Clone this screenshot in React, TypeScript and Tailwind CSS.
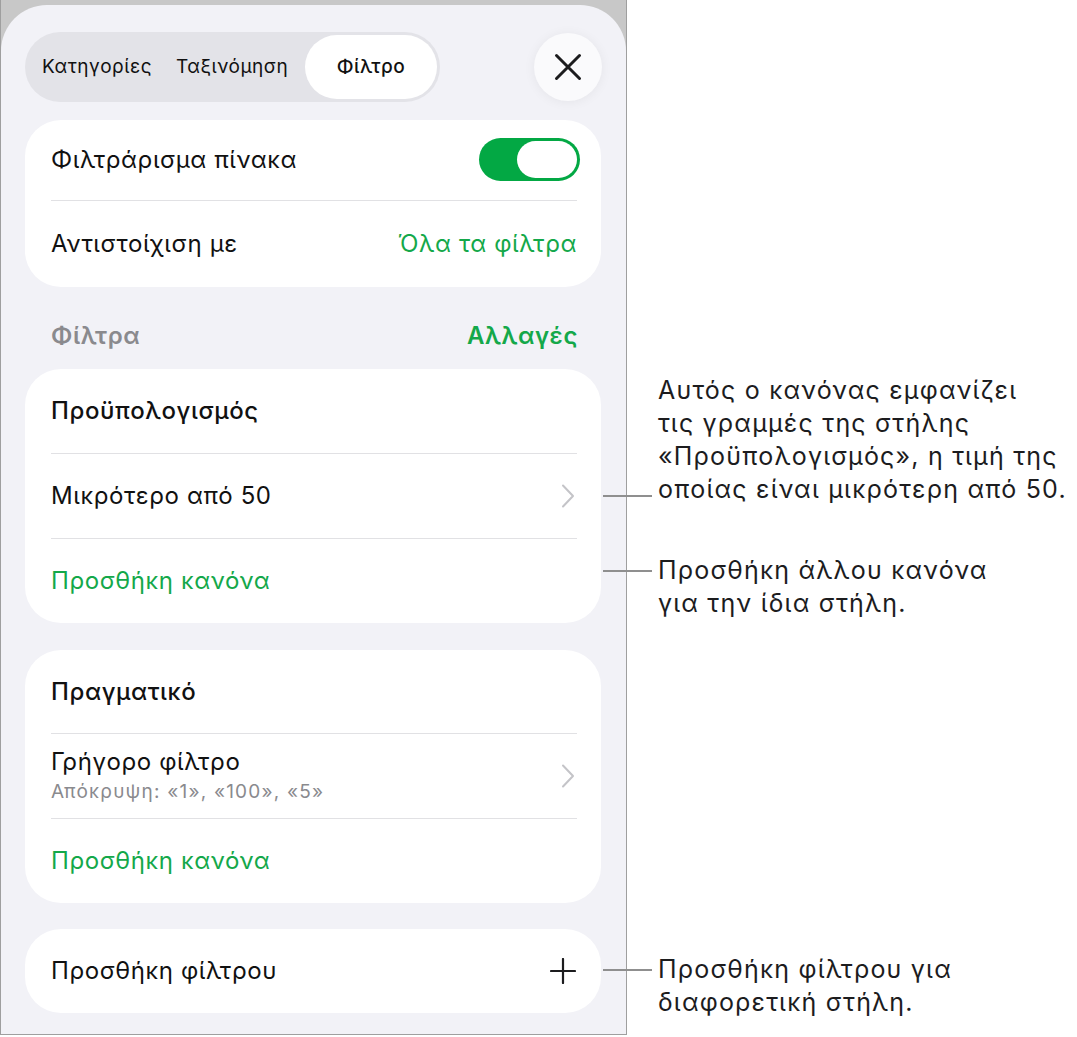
const font = "font-['Inter','Roboto',sans-serif]";

// thin divider inside a grouped card
const Divider = () => <div className="h-px bg-[#e1e1e4]" />;

const Chevron = () => (
  <svg width="14" height="24" viewBox="0 0 14 24" className="mr-[2px]">
    <path d="M2 1.5 L12 12 L2 22.5" fill="none" stroke="#c4c4c8" strokeWidth="2" strokeLinecap="round" strokeLinejoin="round" />
  </svg>
);

const Callout = ({ top, lineAt, lines }: { top: number; lineAt: number; lines: string[] }) => (
  <div className="absolute left-[603px]" style={{ top }}>
    <div className="absolute left-0 h-[2px] w-[49px] bg-[#8f8f8f]" style={{ top: lineAt }} />
    <div className="pl-[55px] text-[25px] leading-[33px] tracking-[1.2px] text-[#1c1c1e] whitespace-nowrap">
      {lines.map((l) => (
        <div key={l}>{l}</div>
      ))}
    </div>
  </div>
);

export default function App() {
  return (
    <div className={`relative w-[1077px] h-[1037px] bg-white ${font}`}>
      {/* sheet frame */}
      <div className="w-[627px] h-[1035px] border-x border-b border-[#9f9f9f] bg-[#c8c8c8] pt-[5px]">
        <div className="h-full rounded-t-[46px] bg-[#f2f2f7] px-[24px] pt-[27px] tracking-[0.6px] text-[#111]">
          {/* tabs + close */}
          <div className="flex items-center justify-between">
            <div className="flex h-[70px] w-[415px] items-center rounded-full bg-[#e3e3e8] pl-[17px] pr-[3px] text-[19px] tracking-[0.5px]">
              <span>Κατηγορίες</span>
              <span className="ml-[24px]">Ταξινόμηση</span>
              <div className="ml-auto flex h-[64px] w-[132px] items-center justify-center rounded-full bg-white font-medium">
                Φίλτρο
              </div>
            </div>
            <button className="flex h-[68px] w-[68px] items-center justify-center rounded-full bg-[#fafafc] shadow-[0_1px_12px_rgba(0,0,0,0.06)]">
              <svg width="28" height="28" viewBox="0 0 28 28">
                <path d="M2.5 2.5 L25.5 25.5 M25.5 2.5 L2.5 25.5" stroke="#1c1c1e" strokeWidth="3" strokeLinecap="round" />
              </svg>
            </button>
          </div>

          {/* table filtering */}
          <div className="mt-[18px] w-[576px] rounded-[36px] bg-white pl-[26px] pr-[24px] text-[24px]">
            <div className="flex h-[80px] items-center justify-between">
              <span>Φιλτράρισμα πίνακα</span>
              <div className="-mr-[3px] mt-[-2px] flex h-[43px] w-[101px] items-center justify-end rounded-full bg-[#03a844] px-[3px]">
                <div className="h-[37px] w-[60px] rounded-full bg-white" />
              </div>
            </div>
            <Divider />
            <div className="flex h-[86px] items-center justify-between">
              <span>Αντιστοίχιση με</span>
              <span className="text-[#14a84a]">Όλα τα φίλτρα</span>
            </div>
          </div>

          {/* section header */}
          <div className="flex h-[82px] items-center justify-between pl-[26px] pr-[24px] pt-[16px] text-[24px] font-semibold">
            <span className="text-[#8a8a8e]">Φίλτρα</span>
            <span className="text-[#14a84a]">Αλλαγές</span>
          </div>

          {/* rule group: budget */}
          <div className="w-[576px] rounded-[36px] bg-white pl-[26px] pr-[24px] text-[24px]">
            <div className="flex h-[84px] items-center font-medium">Προϋπολογισμός</div>
            <Divider />
            <div className="flex h-[84px] items-center justify-between">
              <span>Μικρότερο από 50</span>
              <Chevron />
            </div>
            <Divider />
            <div className="flex h-[84px] items-center text-[#14a84a]">Προσθήκη κανόνα</div>
          </div>

          {/* rule group: actual */}
          <div className="mt-[27px] w-[576px] rounded-[36px] bg-white pl-[26px] pr-[24px] text-[24px]">
            <div className="flex h-[83px] items-center font-medium">Πραγματικό</div>
            <Divider />
            <div className="flex h-[84px] items-center justify-between">
              <div className="flex flex-col">
                <span className="leading-[30px]">Γρήγορο φίλτρο</span>
                <span className="mt-[2px] text-[19px] leading-[26px] tracking-[1.2px] text-[#8a8a8e]">
                  Απόκρυψη: «1», «100», «5»
                </span>
              </div>
              <Chevron />
            </div>
            <Divider />
            <div className="flex h-[84px] items-center text-[#14a84a]">Προσθήκη κανόνα</div>
          </div>

          {/* add filter */}
          <div className="mt-[26px] flex h-[84px] w-[576px] items-center justify-between rounded-[36px] bg-white pl-[26px] pr-[24px] text-[24px]">
            <span>Προσθήκη φίλτρου</span>
            <svg width="26" height="26" viewBox="0 0 26 26" className="mr-[1px]">
              <path d="M13 1 V25 M1 13 H25" stroke="#1c1c1e" strokeWidth="2.2" strokeLinecap="round" />
            </svg>
          </div>
        </div>
      </div>

      {/* annotations */}
      <Callout
        top={374}
        lineAt={121}
        lines={[
          "Αυτός ο κανόνας εμφανίζει",
          "τις γραμμές της στήλης",
          "«Προϋπολογισμός», η τιμή της",
          "οποίας είναι μικρότερη από 50.",
        ]}
      />
      <Callout top={554} lineAt={16} lines={["Προσθήκη άλλου κανόνα", "για την ίδια στήλη."]} />
      <Callout top={953} lineAt={16} lines={["Προσθήκη φίλτρου για", "διαφορετική στήλη."]} />
    </div>
  );
}
